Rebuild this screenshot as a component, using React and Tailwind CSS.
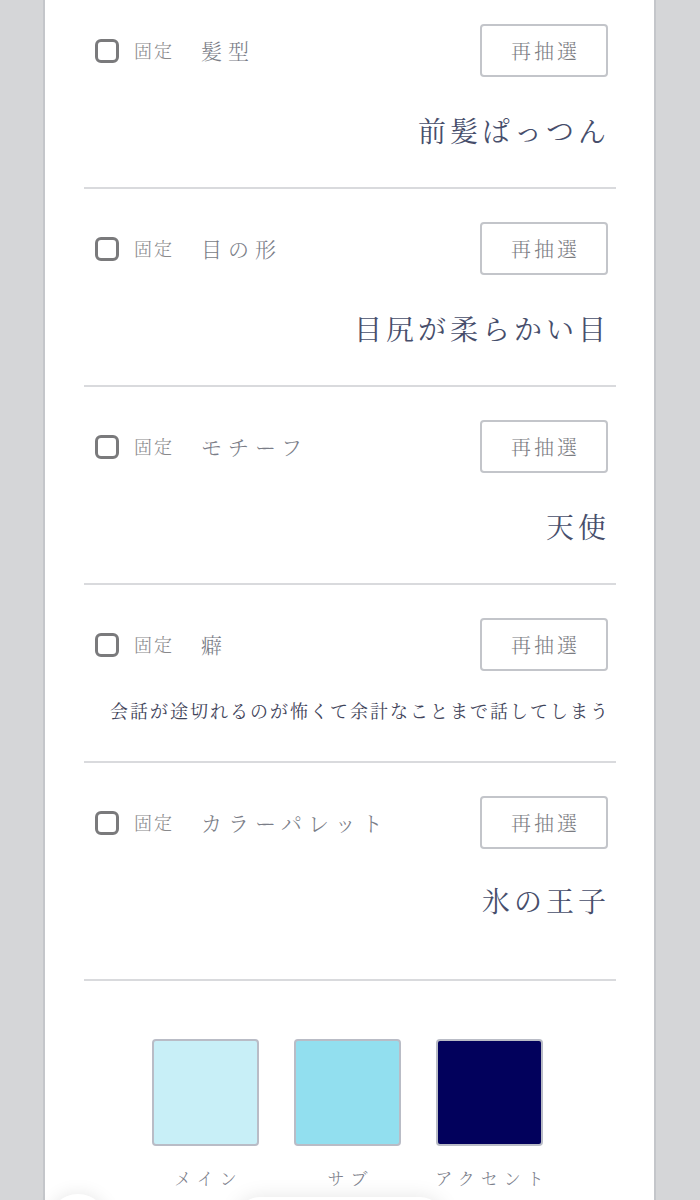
import { useState } from 'react'

const FONT = {
  fontFamily: '"Noto Serif CJK JP", "Liberation Serif", "Noto Sans CJK JP", serif',
}

const ROWS = [
  { key: 'hair', label: '髪型', value: '前髪ぱっつん', first: true },
  { key: 'eyes', label: '目の形', value: '目尻が柔らかい目' },
  { key: 'motif', label: 'モチーフ', value: '天使' },
  { key: 'habit', label: '癖', value: '会話が途切れるのが怖くて余計なことまで話してしまう', small: true },
  { key: 'palette', label: 'カラーパレット', value: '氷の王子', palette: true },
]

const SWATCHES = [
  { name: 'メイン', color: 'bg-[#c8eff7]' },
  { name: 'サブ', color: 'bg-[#92dfef]' },
  { name: 'アクセント', color: 'bg-[#02015c]' },
]

function Checkbox({ checked, onChange }) {
  return (
    <button
      type="button"
      onClick={onChange}
      aria-pressed={checked}
      className="ml-[3px] w-[24px] h-[24px] rounded-[6px] border-[3px] border-[#7a7a7c] bg-white flex items-center justify-center shrink-0"
    >
      {checked && (
        <svg viewBox="0 0 20 20" className="w-4 h-4 text-[#4a5068]" fill="none" stroke="currentColor" strokeWidth="3">
          <path d="M4 10.5l4 4 8-9" />
        </svg>
      )}
    </button>
  )
}

function Row({ row, locked, onToggle }) {
  const pad = row.first ? 'pt-[24px]' : 'pt-[33px]'
  const bottom = row.palette ? 'pb-[58px]' : row.small ? 'pb-[37px]' : 'pb-[36px]'

  return (
    <div className={`${pad} ${bottom} px-2 border-b-2 border-[#d9dadd]`}>
      <div className="h-[53px] flex items-center">
        <Checkbox checked={locked} onChange={onToggle} />
        <span className="ml-[15px] text-[18px] tracking-[2px] text-[#88888b] font-light">固定</span>
        <span className="ml-[27px] text-[21px] tracking-[6px] text-[#7a7d87] font-light">{row.label}</span>
        <button
          type="button"
          className="ml-auto w-[128px] h-[53px] border-2 border-[#c3c5ca] rounded-[4px] text-[20px] tracking-[3px] text-[#7b7c82] font-light pl-[3px]"
        >
          再抽選
        </button>
      </div>
      {row.small ? (
        <p className="mt-[25px] text-right text-[18px] leading-[28px] tracking-[2px] text-[#3f445a] mr-[-2px] whitespace-nowrap">
          {row.value}
        </p>
      ) : (
        <p
          className={`${row.palette ? 'mt-[30px]' : 'mt-[32px]'} text-right text-[28px] leading-[42px] tracking-[4px] text-[#474e6b] mr-[-2px]`}
        >
          {row.value}
        </p>
      )}
    </div>
  )
}

export default function App() {
  const [locked, setLocked] = useState({})

  return (
    <div style={FONT} className="relative h-[1200px] overflow-hidden bg-[#d5d6d8]">
      <div className="ml-[43px] w-[613px] h-[1200px] bg-white border-x-2 border-[#c4c6ca] pl-[39px] pr-[38px]">
        {ROWS.map((row) => (
          <Row
            key={row.key}
            row={row}
            locked={!!locked[row.key]}
            onToggle={() => setLocked((s) => ({ ...s, [row.key]: !s[row.key] }))}
          />
        ))}

        <div className="pt-[58px] flex justify-center gap-[35px] pr-[5px]">
          {SWATCHES.map((s) => (
            <div key={s.name} className="w-[107px] flex flex-col items-center">
              <div className={`w-[107px] h-[107px] rounded-[4px] border-2 border-[#b9bcc6] ${s.color}`} />
              <span className="mt-[20px] text-[17px] leading-[24px] tracking-[6px] pl-[6px] text-[#7c808b] font-light whitespace-nowrap">
                {s.name}
              </span>
            </div>
          ))}
        </div>
      </div>

      {/* floating controls cut off at the bottom */}
      <div className="absolute left-[48px] top-[1194px] w-[60px] h-[60px] rounded-full bg-white shadow-[0_0_18px_rgba(0,0,0,0.1)]" />
      <div className="absolute left-[235px] top-[1197px] w-[210px] h-[50px] rounded-full bg-white shadow-[0_0_20px_rgba(0,0,0,0.1)]" />
    </div>
  )
}
